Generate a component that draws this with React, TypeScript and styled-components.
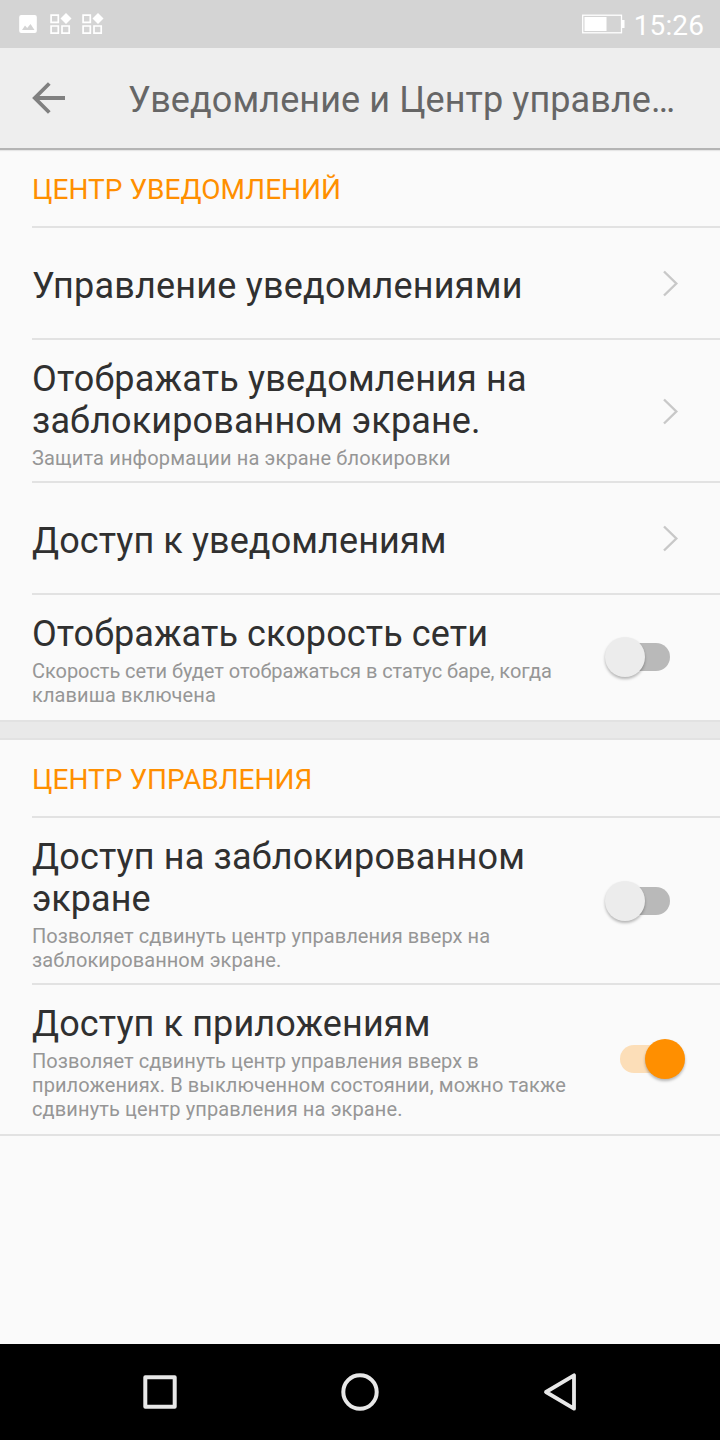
import React from "react";
import styled, { createGlobalStyle } from "styled-components";

const Global = createGlobalStyle`
  * { box-sizing: border-box; }
  body { margin: 0; background: #fafafa; font-family: Roboto, "Noto Sans", sans-serif; }
`;
const Screen = styled.div`
  width: 720px; height: 1440px; display: flex; flex-direction: column; background: #fafafa; overflow: hidden;
`;
const StatusBar = styled.div`
  height: 48px; flex: none; background: #d4d4d4; color: #fff; display: flex; align-items: center;
  justify-content: space-between; padding: 0 16px 0 18px;
`;
const StatusGroup = styled.div<{ $gap: number }>`
  display: flex; align-items: center; gap: ${(p) => p.$gap}px;
`;
const Clock = styled.span`font-size: 28px; line-height: 48px; padding-top: 3px; letter-spacing: 0.1px;`;
const AppBar = styled.header`
  height: 102px; flex: none; background: #eee; border-bottom: 2px solid #b4b4b4; box-shadow: 0 1px 1px rgba(0,0,0,.08);
  display: flex; align-items: center; padding: 0 44px 0 32px; gap: 62px;
`;
const Title = styled.h1`
  margin: 0; padding-top: 4px; font-size: 36px; font-weight: 400; color: #666; white-space: nowrap; line-height: 42px;
  letter-spacing: 0.09px;
`;
const SectionTitle = styled.h2`
  margin: 0; padding-left: 32px; height: 76px; line-height: 80px; font-size: 28px; font-weight: 400; color: #ff8f00;
  letter-spacing: 0.03px;
`;
const Row = styled.div<{ $height: number; $end: number }>`
  margin-left: 32px; height: ${(p) => p.$height}px; border-top: 2px solid #e2e2e2;
  display: flex; align-items: center; justify-content: space-between; padding-right: ${(p) => p.$end}px;
`;
const Copy = styled.div<{ $top: number }>`
  display: flex; flex-direction: column; white-space: nowrap; padding-top: ${(p) => p.$top}px;
`;
const Line = styled.span<{ $tracking: number }>`display: block; letter-spacing: ${(p) => p.$tracking}px;`;
const Label = styled.div`font-size: 36px; line-height: 42px; color: #303030;`;
const Hint = styled.div`font-size: 20px; line-height: 24px; color: #969696; padding-top: 4px;`;
const Gap = styled.div`height: 20px; background: #e9e9e9; border: solid #e2e2e2; border-width: 2px 0;`;
const End = styled.div`height: 2px; background: #e2e2e2;`;
const NavBar = styled.nav`
  height: 96px; flex: none; margin-top: auto; background: #000; display: flex; align-items: center;
  justify-content: space-between; padding: 0 136px;
`;
const Track = styled.div<{ $on?: boolean; $lift: number }>`
  width: 50px; height: 28px; border-radius: 14px; background: ${(p) => (p.$on ? "#fcdeb8" : "#b9b9b9")};
  display: flex; align-items: center; justify-content: ${(p) => (p.$on ? "flex-end" : "flex-start")};
  margin-bottom: ${(p) => p.$lift}px;
`;
const Thumb = styled.div<{ $on?: boolean }>`
  width: 40px; height: 40px; flex: none; border-radius: 50%; margin: 0 -15px;
  background: ${(p) => (p.$on ? "#ff8f00" : "#ececec")}; box-shadow: 0 2px 3px rgba(0,0,0,.28);
`;
const Toggle = ({ on, lift }: { on?: boolean; lift: number }) => <Track $on={on} $lift={lift}><Thumb $on={on} /></Track>;
const Chevron = () => (
  <svg width="20" height="28" viewBox="0 0 20 28" fill="none" stroke="#c8c8c8" strokeWidth="2.4"><path d="M2 2.500L14.300 14.500L2 26.500" /></svg>
);
const Widgets = () => (
  <svg width="22" height="22" viewBox="0 0 22 22" fill="none" stroke="#fff" strokeWidth="1.7">
    <path d="M1.1 2.1h7.2v7.2H1.1zM1.1 13h7.2v7.2H1.1zM12 13h7.2v7.2H12z" /><path d="M16 0l5.500 5.500L16 11l-5.500-5.500z" fill="#fff" stroke="none" />
  </svg>
);

type TextLine = [text: string, tracking: number];
type Item = { label: TextLine[]; hint?: TextLine[]; height: number; top: number; lift?: number; on?: boolean; link?: boolean };
const center: Item[] = [
  { label: [["Управление уведомлениями", 0.2]], height: 112, top: 6, link: true },
  {
    label: [["Отображать уведомления на", 0.19], ["заблокированном экране.", 0.12]],
    hint: [["Защита информации на экране блокировки", 0.15]], height: 143, top: 6, link: true,
  },
  { label: [["Доступ к уведомлениям", 0.09]], height: 112, top: 6, link: true },
  {
    label: [["Отображать скорость сети", 0.1]],
    hint: [["Скорость сети будет отображаться в статус баре, когда", -0.05], ["клавиша включена", 0.1]], height: 127, top: 4, lift: 2,
  },
];
const control: Item[] = [
  {
    label: [["Доступ на заблокированном", 0.16], ["экране", 0]],
    hint: [["Позволяет сдвинуть центр управления вверх на", 0.06], ["заблокированном экране.", 0.07]], height: 167, top: 6, lift: 0,
  },
  {
    label: [["Доступ к приложениям", 0.12]],
    hint: [
      ["Позволяет сдвинуть центр управления вверх в", 0.05],
      ["приложениях. В выключенном состоянии, можно также", 0.09],
      ["сдвинуть центр управления на экране.", 0.13],
    ],
    height: 151, top: 4, lift: 2, on: true,
  },
];
const Lines = ({ lines }: { lines: TextLine[] }) => (
  <>{lines.map(([text, tracking]) => <Line key={text} $tracking={tracking}>{text}</Line>)}</>
);
const Rows = ({ items }: { items: Item[] }) => (
  <>
    {items.map((i) => (
      <Row key={i.label[0][0]} $height={i.height} $end={i.link ? 38 : 50}>
        <Copy $top={i.top}>
          <Label><Lines lines={i.label} /></Label>
          {i.hint && <Hint><Lines lines={i.hint} /></Hint>}
        </Copy>
        {i.link ? <Chevron /> : <Toggle on={i.on} lift={i.lift ?? 0} />}
      </Row>
    ))}
  </>
);

export default function App() {
  return (
    <Screen>
      <Global />
      <StatusBar>
        <StatusGroup $gap={10}>
          <svg width="22" height="20" viewBox="0 0 22 20"><path fillRule="evenodd" fill="#fff" d="M3.200 1h13.600a2 2 0 0 1 2 2v14a2 2 0 0 1-2 2H3.200a2 2 0 0 1-2-2V3a2 2 0 0 1 2-2zM4 16h12.500l-4-6-3.300 4-2.200-2.500z" /></svg>
          <Widgets /><Widgets />
        </StatusGroup>
        <StatusGroup $gap={9}>
          <svg width="43" height="20" viewBox="0 0 43 20"><rect x=".7" y="1.200" width="38.800" height="17.600" fill="none" stroke="#fff" strokeWidth="1.300" /><path fill="#fff" d="M2.500 3h22v14h-22zM40 6h2.500v8H40z" /></svg>
          <Clock>15:26</Clock>
        </StatusGroup>
      </StatusBar>
      <AppBar>
        <svg width="34" height="32" viewBox="0 0 34 32" fill="none" stroke="#808080" strokeWidth="3.800"><path d="M33 16H3M17.300 1.500L2.800 16l14.500 14.500" /></svg>
        <Title>Уведомление и Центр управле…</Title>
      </AppBar>
      <SectionTitle>ЦЕНТР УВЕДОМЛЕНИЙ</SectionTitle>
      <Rows items={center} />
      <Gap />
      <SectionTitle>ЦЕНТР УПРАВЛЕНИЯ</SectionTitle>
      <Rows items={control} />
      <End />
      <NavBar>
        <svg width="48" height="48" viewBox="0 0 48 48" fill="none" stroke="#e8e8e8" strokeWidth="4" strokeLinejoin="round"><rect x="9.300" y="9.300" width="29.400" height="29.400" /></svg>
        <svg width="48" height="48" viewBox="0 0 48 48" fill="none" stroke="#e8e8e8" strokeWidth="4"><circle cx="24" cy="24" r="16.700" /></svg>
        <svg width="48" height="48" viewBox="0 0 48 48" fill="none" stroke="#e8e8e8" strokeWidth="3.800" strokeLinejoin="round"><path d="M38 7.300v33.400L10 24z" /></svg>
      </NavBar>
    </Screen>
  );
}
